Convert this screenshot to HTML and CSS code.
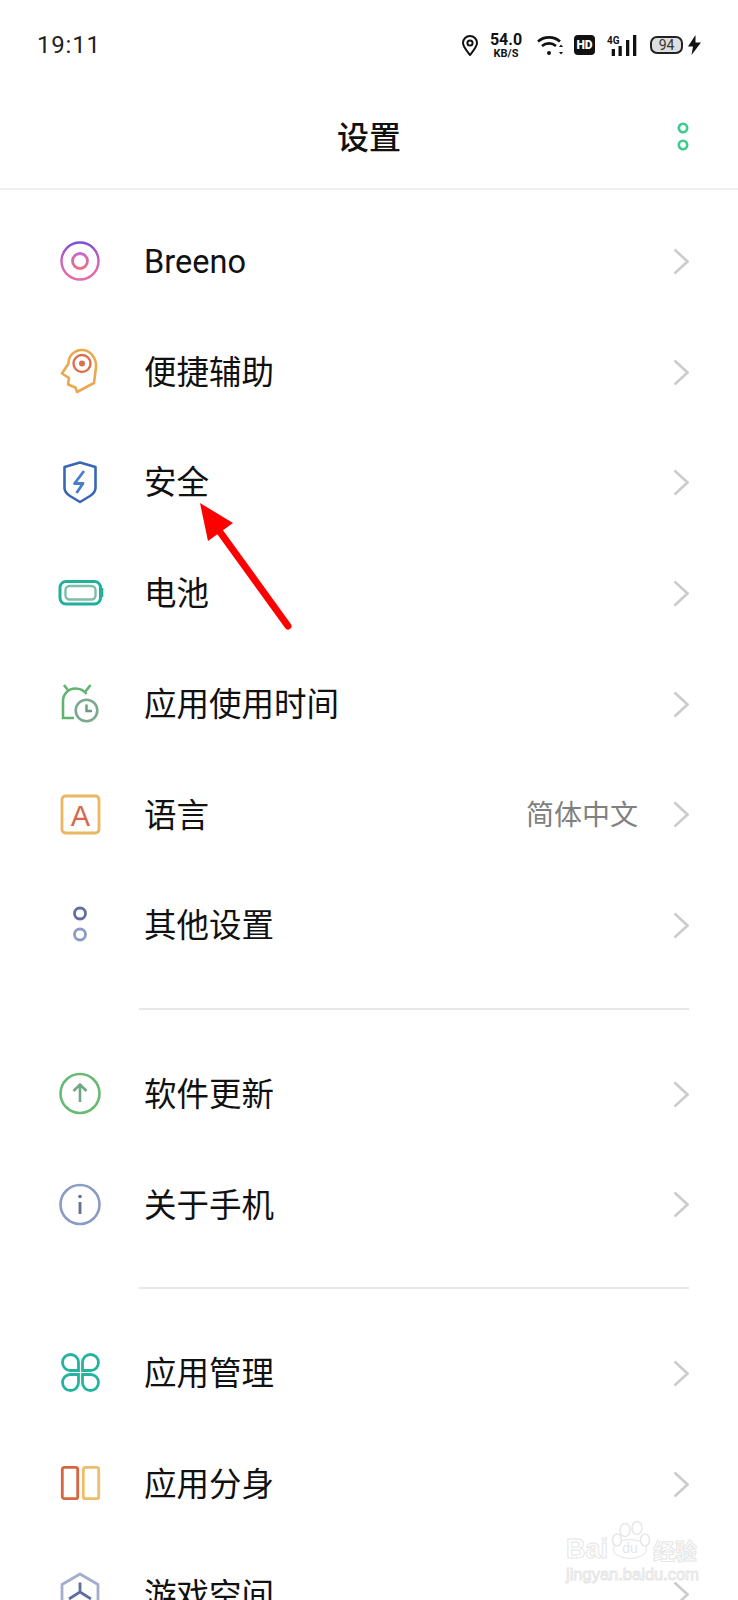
FILE: index.html
```html
<!DOCTYPE html>
<html lang="zh">

<head>
    <meta charset="UTF-8">
    <meta name="viewport" content="width=device-width, initial-scale=1.0">
    <title>设置</title>
    <link rel="stylesheet" href="styles.css">
</head>

<body>
    <!-- Status bar -->
    <div class="status-bar">
        <span class="time">19:11</span>
        <div class="status-icons">
            <svg class="pin" width="16" height="21" viewBox="0 0 16 21" fill="none" stroke="#111" stroke-width="2">
                <path d="M8 20C4 15 1 11.500 1 8a7 7 0 0 1 14 0c0 3.500-3 7-7 12z" />
                <circle cx="8" cy="8" r="2.600" />
            </svg>
            <div class="speed">
                <span class="speed-num">54.0</span>
                <span class="speed-unit">KB/S</span>
            </div>
            <svg class="wifi" width="26" height="21" viewBox="0 0 26 21" fill="none" stroke="#111" stroke-width="2.600">
                <path d="M1 6.500C7 1 17 1 23 6.500" />
                <path d="M5 11C9 7.500 15 7.500 19 11" />
                <circle cx="12" cy="18" r="2" fill="#111" stroke="none" />
                <path d="M24 9.500l-2 2.500h4zM24 19.500l-2-2.500h4z" fill="#111" stroke="none" />
            </svg>
            <span class="hd">HD</span>
            <svg class="signal" width="30" height="21" viewBox="0 0 30 21" fill="#111">
                <text class="signal-label" x="0" y="9">4G</text>
                <rect x="4.700" y="14" width="3.300" height="7" />
                <rect x="11.500" y="11" width="3.300" height="10" />
                <rect x="19" y="5" width="3.300" height="16" />
                <rect x="26" y="0" width="3.300" height="21" />
            </svg>
            <div class="battery"><span class="battery-num">94</span></div>
            <svg class="bolt" width="13" height="20" viewBox="0 0 13 20" fill="#111">
                <path d="M7.500 0L0 11.500h5L3.500 20 13 7.500H7.500z" />
            </svg>
        </div>
    </div>

    <!-- Title -->
    <div class="title-bar">
        <span></span>
        <h1>设置</h1>
        <svg class="more" width="12" height="29" viewBox="0 0 12 29" fill="none" stroke="#3ecb8f" stroke-width="2.600">
            <circle cx="6" cy="6" r="4.200" />
            <circle cx="6" cy="23" r="4.200" />
        </svg>
    </div>

    <svg class="defs" width="0" height="0">
        <defs>
            <linearGradient id="breeno-outer" x1="0" y1="0" x2="0" y2="1">
                <stop offset="0" stop-color="#7a4fd0" />
                <stop offset="0.500" stop-color="#d060b8" />
                <stop offset="1" stop-color="#e56aa8" />
            </linearGradient>
            <linearGradient id="breeno-inner" x1="0" y1="0" x2="0" y2="1">
                <stop offset="0" stop-color="#c868c8" />
                <stop offset="1" stop-color="#e8707f" />
            </linearGradient>
        </defs>
    </svg>

    <div class="group group-first">
        <div class="row">
            <svg class="icon" viewBox="0 0 48 48" fill="none">
                <circle cx="24" cy="24" r="18.500" stroke="url(#breeno-outer)" stroke-width="2.400" />
                <circle cx="24" cy="24" r="7.500" stroke="url(#breeno-inner)" stroke-width="2.800" />
            </svg>
            <span class="label">Breeno</span>
            <svg class="chevron" viewBox="0 0 16 27"><path d="M1.500 1.500L14.500 13.500L1.500 25.500" /></svg>
        </div>
        <div class="row">
            <svg class="icon" viewBox="0 0 48 48" fill="none">
                <path d="M38 35L40 19C40.500 9 33.500 2 26 2C18 2 12.500 8 12.500 15.500L6 25.500L13 30L12 36.500L19.500 39.500L21 44L38 35Z" stroke="#eaa94f" stroke-width="2.600" stroke-linejoin="round" />
                <circle cx="26" cy="15.500" r="8.500" stroke="#dc6f4d" stroke-width="2.400" />
                <circle cx="26" cy="15.500" r="3" fill="#dc6f4d" />
            </svg>
            <span class="label">便捷辅助</span>
            <svg class="chevron" viewBox="0 0 16 27"><path d="M1.500 1.500L14.500 13.500L1.500 25.500" /></svg>
        </div>
        <div class="row">
            <svg class="icon" viewBox="0 0 48 48" fill="none">
                <path d="M24 3.500L39.500 8V29C39.500 33 37 35 34 37L24 43L14 37C11 35 8.500 33 8.500 29V8L24 3.500Z" stroke="#3a66b5" stroke-width="2.600" stroke-linejoin="round" />
                <path d="M28 12L18.500 24.500H27L20.500 34" stroke="#4a7ccc" stroke-width="2.800" stroke-linejoin="round" />
            </svg>
            <span class="label">安全</span>
            <svg class="chevron" viewBox="0 0 16 27"><path d="M1.500 1.500L14.500 13.500L1.500 25.500" /></svg>
        </div>
        <div class="row">
            <svg class="icon" viewBox="0 0 48 48" fill="none">
                <rect x="4" y="12.500" width="40.500" height="22.500" rx="6" stroke="#21b09b" stroke-width="3" />
                <rect x="9.500" y="17" width="30" height="13.500" rx="4" stroke="#7cbfa8" stroke-width="2.400" />
                <rect x="45.500" y="19" width="1.800" height="9" fill="#21b09b" />
            </svg>
            <span class="label">电池</span>
            <svg class="chevron" viewBox="0 0 16 27"><path d="M1.500 1.500L14.500 13.500L1.500 25.500" /></svg>
        </div>
        <div class="row">
            <svg class="icon" viewBox="0 0 48 48" fill="none">
                <path d="M18 38H7V21C7 14 12.500 8.500 19.500 8.500C24 8.500 28 10.500 30.500 14" stroke="#62b36f" stroke-width="2.600" />
                <path d="M8 5L13 11.500M34.500 5L29.500 11.500" stroke="#62b36f" stroke-width="2.600" />
                <circle cx="30.500" cy="30.500" r="10.800" stroke="#7aa98f" stroke-width="2.600" />
                <path d="M30.500 24.500V31H36" stroke="#6a9a80" stroke-width="2.400" />
            </svg>
            <span class="label">应用使用时间</span>
            <svg class="chevron" viewBox="0 0 16 27"><path d="M1.500 1.500L14.500 13.500L1.500 25.500" /></svg>
        </div>
        <div class="row">
            <svg class="icon" viewBox="0 0 48 48" fill="none">
                <rect x="6" y="5" width="37" height="37" rx="3.500" stroke="#eab660" stroke-width="2.800" />
                <text class="lang-letter" x="24.500" y="34.500" text-anchor="middle">A</text>
            </svg>
            <span class="label">语言</span>
            <span class="value">简体中文</span>
            <svg class="chevron" viewBox="0 0 16 27"><path d="M1.500 1.500L14.500 13.500L1.500 25.500" /></svg>
        </div>
        <div class="row">
            <svg class="icon" viewBox="0 0 48 48" fill="none" stroke-width="2.800">
                <circle cx="24" cy="12.500" r="5.500" stroke="#5f6f9e" />
                <circle cx="24" cy="33.500" r="5.500" stroke="#8c9cc4" />
            </svg>
            <span class="label">其他设置</span>
            <svg class="chevron" viewBox="0 0 16 27"><path d="M1.500 1.500L14.500 13.500L1.500 25.500" /></svg>
        </div>
    </div>

    <div class="divider"></div>

    <div class="group">
        <div class="row">
            <svg class="icon" viewBox="0 0 48 48" fill="none">
                <circle cx="24" cy="23.500" r="19.500" stroke="#67b973" stroke-width="2.600" />
                <path d="M24 32V14.500M17.500 21L24 14.500L30.500 21" stroke="#6ea886" stroke-width="2.600" />
            </svg>
            <span class="label">软件更新</span>
            <svg class="chevron" viewBox="0 0 16 27"><path d="M1.500 1.500L14.500 13.500L1.500 25.500" /></svg>
        </div>
        <div class="row">
            <svg class="icon" viewBox="0 0 48 48" fill="none">
                <circle cx="24" cy="23.500" r="19.500" stroke="#8a9cc5" stroke-width="2.600" />
                <circle cx="24" cy="15.500" r="1.800" fill="#5d6f96" />
                <path d="M24 21V33" stroke="#5d6f96" stroke-width="2.800" />
            </svg>
            <span class="label">关于手机</span>
            <svg class="chevron" viewBox="0 0 16 27"><path d="M1.500 1.500L14.500 13.500L1.500 25.500" /></svg>
        </div>
    </div>

    <div class="divider"></div>

    <div class="group">
        <div class="row">
            <svg class="icon" viewBox="0 0 48 48" fill="none" stroke="#25b3a0" stroke-width="2.800">
                <path d="M22.500 20.500V12.500a8 8 0 1 0-8 8Z" />
                <path d="M26.500 20.500V12.500a8 8 0 1 1 8 8Z" />
                <path d="M22.500 24.500V32.500a8 8 0 1 1-8-8Z" />
                <path d="M26.500 24.500V32.500a8 8 0 1 0 8-8Z" />
            </svg>
            <span class="label">应用管理</span>
            <svg class="chevron" viewBox="0 0 16 27"><path d="M1.500 1.500L14.500 13.500L1.500 25.500" /></svg>
        </div>
        <div class="row">
            <svg class="icon" viewBox="0 0 48 48" fill="none" stroke-width="2.800">
                <rect x="6.300" y="7.300" width="15.400" height="31.400" rx="2" stroke="#d9643f" />
                <rect x="27.300" y="7.300" width="15.400" height="31.400" rx="2" stroke="#eebd6a" />
            </svg>
            <span class="label">应用分身</span>
            <svg class="chevron" viewBox="0 0 16 27"><path d="M1.500 1.500L14.500 13.500L1.500 25.500" /></svg>
        </div>
        <div class="row">
            <svg class="icon" viewBox="0 0 48 48" fill="none" stroke-width="2.800">
                <path d="M24 3L42 13.500V34.500L24 45L6 34.500V13.500Z" stroke="#a2aecb" stroke-linejoin="round" />
                <path d="M24 11.500V21L13 28M24 21L35 28" stroke="#5d6f9e" />
            </svg>
            <span class="label">游戏空间</span>
            <svg class="chevron" viewBox="0 0 16 27"><path d="M1.500 1.500L14.500 13.500L1.500 25.500" /></svg>
        </div>
    </div>

    <!-- Red arrow drawn over the screenshot -->
    <svg class="red-arrow" width="110" height="140" viewBox="0 0 110 140">
        <path d="M10 8L43 28L18 46Z" fill="#fe0000" />
        <path d="M30 37L98 131" stroke="#fe0000" stroke-width="7" stroke-linecap="round" />
    </svg>

    <!-- Baidu watermark -->
    <div class="watermark">
        <svg class="paw" width="50" height="40" viewBox="0 0 50 40" fill="#fff" stroke="#e6e6e6" stroke-width="1.500">
            <ellipse cx="7" cy="20" rx="4.500" ry="6" />
            <ellipse cx="15" cy="10" rx="5" ry="6.500" />
            <ellipse cx="27" cy="8" rx="5" ry="6.500" />
            <ellipse cx="35" cy="20" rx="4.500" ry="6" />
        </svg>
        <div class="mark-top">
            <span>Bai</span><span class="mark-du">du</span><span class="mark-cn">经验</span>
        </div>
        <div class="mark-url">jingyan.baidu.com</div>
    </div>
</body>

</html>
```

FILE: styles.css
```css
body {
    margin: 0;
    width: 738px;
    height: 1600px;
    position: relative;
    overflow: hidden;
    background-color: #FFFFFF;
    color: #111111;
    font-family: Roboto, "Noto Sans CJK SC", sans-serif;
}

.status-bar {
    height: 90px;
    display: flex;
    align-items: center;
    justify-content: space-between;
    padding: 0 37px 0 37px;
}

.time {
    font-family: Roboto, sans-serif;
    font-size: 24px;
    letter-spacing: 0.8px;
    color: #222222;
}

.status-icons {
    display: flex;
    align-items: center;
}

.pin {
    margin-right: 12px;
}

.speed {
    display: flex;
    flex-direction: column;
    align-items: center;
    width: 32px;
    margin-right: 15px;
    font-family: Roboto, sans-serif;
    font-weight: 700;
    line-height: 1;
}

.speed-num {
    font-size: 16px;
    margin-top: 1px;
}

.speed-unit {
    font-size: 11px;
}

.wifi {
    margin-right: 11px;
}

.hd {
    width: 21px;
    height: 20px;
    margin-right: 12px;
    border-radius: 4px;
    background-color: #111111;
    color: #FFFFFF;
    font-family: Roboto, sans-serif;
    font-size: 12px;
    font-weight: 900;
    line-height: 20px;
    text-align: center;
}

.signal {
    margin-right: 13px;
}

.signal-label {
    font-family: Roboto, sans-serif;
    font-size: 10px;
    font-weight: 700;
}

.battery {
    width: 33px;
    height: 18px;
    margin-right: 5px;
    box-sizing: border-box;
    border: 2px solid #222222;
    border-radius: 7px;
    background-color: #DEDEDE;
    text-align: center;
}

.battery-num {
    display: block;
    font-family: Roboto, sans-serif;
    font-size: 14px;
    line-height: 14px;
    color: #333333;
}

.title-bar {
    height: 98px;
    display: grid;
    grid-template-columns: 1fr auto 1fr;
    align-items: center;
    border-bottom: 2px solid #EEEEEE;
    padding: 0 49px;
}

.title-bar h1 {
    margin: 0 0 8px 0;
    font-family: "Noto Sans CJK SC", sans-serif;
    font-size: 32px;
    font-weight: 500;
    line-height: 1;
}

.more {
    justify-self: end;
    margin-bottom: 6px;
}

.defs {
    display: block;
}

.group-first {
    padding-top: 16px;
}

.row {
    height: 110.7px;
    display: flex;
    align-items: center;
    padding: 0 49px 0 56px;
}

.icon {
    width: 48px;
    height: 48px;
    flex: none;
    margin-right: 40px;
}

.label {
    flex: 1;
    padding-top: 2px;
    font-size: 32.5px;
    line-height: 1;
}

.lang-letter {
    font-family: "Liberation Sans", sans-serif;
    font-size: 29px;
    fill: #D9664A;
}

.value {
    margin-right: 35px;
    padding-top: 2px;
    font-size: 28px;
    line-height: 1;
    color: #808080;
}

.chevron {
    width: 16px;
    height: 27px;
    flex: none;
    fill: none;
    stroke: #CCCCCC;
    stroke-width: 2.6;
}

.divider {
    height: 2px;
    margin: 27px 49px 29px 139px;
    background-color: #E8E8E8;
}

.red-arrow {
    position: absolute;
    left: 190px;
    top: 495px;
}

.watermark {
    position: absolute;
    left: 566px;
    top: 1520px;
    width: 134px;
    color: #FFFFFF;
    -webkit-text-stroke: 1px #E6E6E6;
}

.paw {
    position: absolute;
    left: 44px;
    top: 0;
}

.mark-top {
    display: flex;
    align-items: center;
    margin-top: 14px;
    font-family: "Liberation Sans", sans-serif;
    font-size: 27px;
    font-weight: 700;
    line-height: 30px;
}

.mark-du {
    width: 34px;
    height: 20px;
    margin-left: 5px;
    box-sizing: border-box;
    border: 1.5px solid #E6E6E6;
    border-radius: 50%;
    color: #E6E6E6;
    font-size: 14px;
    font-weight: 400;
    line-height: 17px;
    text-align: center;
    -webkit-text-stroke: 0;
}

.mark-cn {
    margin-left: 6px;
    font-family: "Noto Sans CJK SC", sans-serif;
    font-size: 22px;
}

.mark-url {
    font-family: "Liberation Sans", sans-serif;
    font-size: 16.5px;
    line-height: 20px;
    white-space: nowrap;
}
```
